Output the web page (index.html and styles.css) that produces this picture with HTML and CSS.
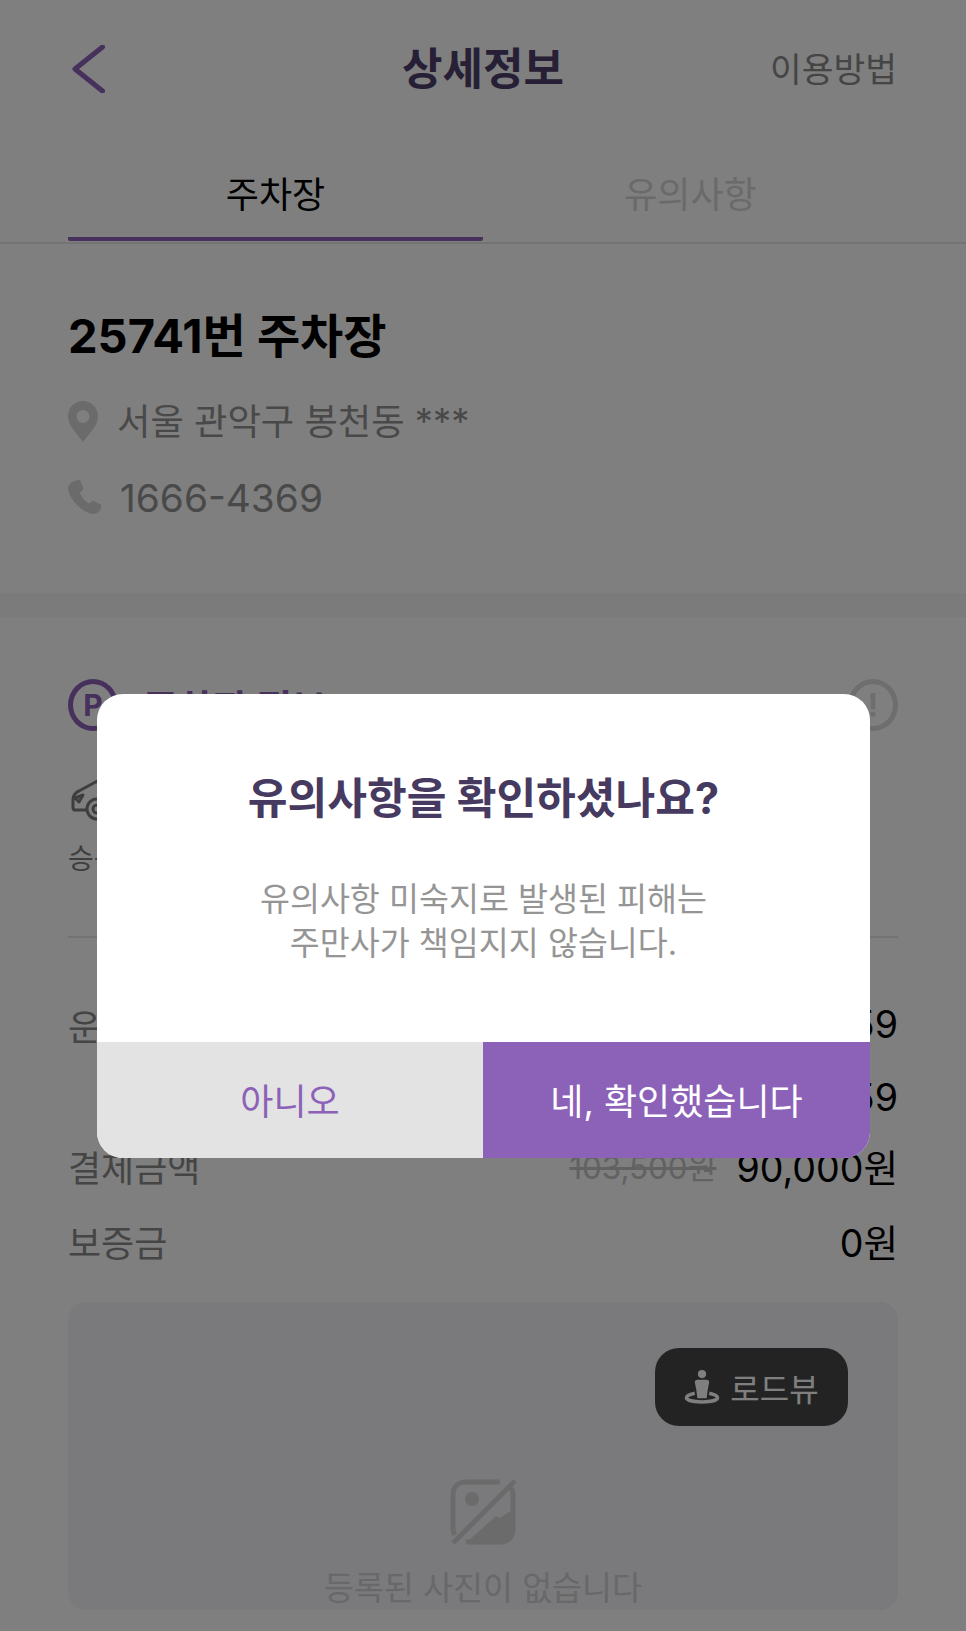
FILE: index.html
```html
<!DOCTYPE html>
<html lang="ko">
<head>
<meta charset="utf-8">
<title>상세정보</title>
<link rel="stylesheet" href="styles.css">
</head>
<body>
<div class="page">
  <header class="header">
    <svg class="back" viewBox="0 0 32 48" aria-hidden="true"><path d="M30 2 2.500 24 30 46" /></svg>
    <h1 class="header-title">상세정보</h1>
    <span class="header-link">이용방법</span>
  </header>
  <nav class="tabs">
    <div class="tab tab-active">주차장</div>
    <div class="tab">유의사항</div>
  </nav>
  <section class="info">
    <h2 class="lot-name">25741번 주차장</h2>
    <div class="info-row info-address">
      <svg class="pin" viewBox="0 0 30 41" aria-hidden="true"><path fill-rule="evenodd" d="M15 0C6.700 0 0 6.700 0 15c0 4.500 1.800 8.500 4.500 12.500L15 41l10.500-13.500C28.200 23.500 30 19.500 30 15 30 6.700 23.300 0 15 0Zm0 9a6.500 6.500 0 1 1 0 13 6.500 6.500 0 0 1 0-13Z"/></svg>
      <span>서울 관악구 봉천동 ***</span>
    </div>
    <div class="info-row info-phone">
      <svg class="phone" viewBox="0 0 34 34" aria-hidden="true"><path d="M7.500.800 10.500 0c1 0 1.700.5 2.100 1.400l2.500 6.400c.3 1 .1 1.800-.6 2.500l-2.800 2.600c1.500 3.600 5.100 8.200 9.100 10.700l3.200-2.300c.8-.5 1.700-.6 2.500-.1l6 3.400c.9.500 1.200 1.400.9 2.300l-1.200 3.200C31 32.400 28.800 33.800 26 34 14 33.600 .8 18.600 0 8.600 0 5 3 1.800 7.500.800Z"/></svg>
      <span>1666-4369</span>
    </div>
  </section>
  <div class="band"></div>
  <section class="detail">
    <div class="detail-head">
      <span class="p-badge">P</span>
      <h3 class="detail-title">주차장 정보</h3>
      <span class="alert-badge">!</span>
    </div>
    <div class="car-block">
      <svg class="car" viewBox="0 0 60 44" aria-hidden="true"><path d="M30 2 8 14Q3 16 2 22V31L3 33H16M4 21l8-3-4 7Z"/><path d="M26 8 40 3"/><circle cx="26" cy="32" r="10"/><circle cx="26" cy="32" r="4"/></svg>
      <span class="car-label">승용</span>
    </div>
    <div class="rows">
      <div class="row row-a"><span class="row-label">운영시간</span><span class="row-value">00:00 ~ 23:59</span></div>
      <div class="row row-a"><span class="row-label"></span><span class="row-value">23:59</span></div>
      <div class="row row-b"><span class="row-label">결제금액</span><span class="row-value"><s class="old-price">103,500원</s>90,000원</span></div>
      <div class="row row-c"><span class="row-label">보증금</span><span class="row-value">0원</span></div>
    </div>
    <div class="photo">
      <div class="roadview">
        <svg class="roadview-icon" viewBox="0 0 34 33" aria-hidden="true"><circle class="rv-fill" cx="17" cy="4" r="4"/><path class="rv-fill" d="M12.500 9.500h9c1.500 0 2.500 1 2.500 2.500l-1.500 7.500-1 8h-9l-1-8L10 12c0-1.500 1-2.500 2.500-2.500Z"/><path class="rv-line" d="M10 22.500C5 23.500 2 25 2 27c0 2.500 6.500 4 15 4s15-1.500 15-4c0-2-3-3.500-8-4.500"/></svg>
        <span>로드뷰</span>
      </div>
      <svg class="no-photo" viewBox="0 0 66 66" aria-hidden="true"><path class="np-frame" d="M50 3H16C8 3 3 8 3 16v33c0 3 .500 5 1.500 7M16 63h34c8 0 13-5 13-13V16c0-3-.500-5-1.500-7"/><circle class="np-fill" cx="22" cy="20" r="7"/><path class="np-fill" d="M16 64 46 37l4 2 12-8v19c0 8-5 14-13 14Z"/><path class="np-slash" d="M65 2 3 64" /></svg>
      <p class="no-photo-text">등록된 사진이 없습니다</p>
    </div>
  </section>

  <div class="overlay">
    <div class="dialog">
      <div class="dialog-body">
        <h2 class="dialog-title">유의사항을 확인하셨나요?</h2>
        <p class="dialog-text">유의사항 미숙지로 발생된 피해는<br>주만사가 책임지지 않습니다.</p>
      </div>
      <div class="dialog-actions">
        <button class="btn btn-no">아니오</button>
        <button class="btn btn-yes">네, 확인했습니다</button>
      </div>
    </div>
  </div>
</div>
</body>
</html>
```
FILE: styles.css
```css
* { box-sizing: border-box; }
html, body { margin: 0; padding: 0; }
body {
  background: #fff;
  font-family: Inter, "Noto Sans CJK KR", sans-serif;
  color: #000;
}
.page {
  position: relative;
  width: 966px;
  height: 1631px;
  overflow: hidden;
  background: #fff;
}
.header {
  height: 136px;
  padding: 0 69px 2px 72px;
  display: flex;
  align-items: center;
  justify-content: space-between;
  position: relative;
}
.back {
  width: 33px;
  height: 48px;
  margin-top: 4px;
  fill: none;
  stroke: #8c61b8;
  stroke-width: 5;
  stroke-linecap: round;
  stroke-linejoin: round;
}
.header-title {
  margin: -3px 0 0;
  position: absolute;
  left: 0;
  right: 0;
  text-align: center;
  font-size: 44px;
  font-weight: 700;
  color: #4c3f6a;
}
.header-link {
  font-size: 34.500px;
  color: #8a8a8a;
}
.tabs {
  height: 108px;
  padding: 0 68px;
  display: flex;
  border-bottom: 2px solid #e6e6e6;
}
.tab {
  flex: 1;
  height: 105px;
  display: flex;
  align-items: center;
  justify-content: center;
  padding-top: 10px;
  font-size: 36px;
  color: #d4d4d4;
  border-bottom: 4px solid transparent;
}
.tab-active {
  color: #000;
  border-bottom-color: #8c61b8;
  border-radius: 2px;
}
.info {
  height: 349px;
  padding: 62px 68px 0;
}
.lot-name {
  margin: 0;
  font-size: 47px;
  line-height: 60px;
  font-weight: 700;
}
.info-row {
  display: flex;
  align-items: center;
  color: #929292;
  font-size: 36.300px;
  height: 50px;
}
.info-address { margin-top: 28px; gap: 19px; }
.info-phone { margin-top: 28px; gap: 18px; font-size: 38.800px; }
.pin { width: 30px; height: 41px; margin-top: 4px; fill: #d6d6d6; }
.phone { width: 34px; height: 34px; fill: #d6d6d6; }
.band { height: 24px; background: #f6f6f6; }
.detail { padding: 62px 68px 0; }
.detail-head {
  display: flex;
  align-items: center;
  height: 52px;
}
.p-badge {
  width: 50px;
  height: 52px;
  border: 5px solid #8c61b8;
  border-radius: 50%;
  color: #8c61b8;
  font-size: 30px;
  font-weight: 700;
  display: flex;
  align-items: center;
  justify-content: center;
}
.detail-title {
  margin: 0 0 0 25px;
  flex: 1;
  font-size: 38px;
  font-weight: 700;
  color: #8c61b8;
}
.alert-badge {
  width: 50px;
  height: 52px;
  border: 5px solid #dcdcdc;
  border-radius: 50%;
  color: #dcdcdc;
  font-size: 32px;
  font-weight: 700;
  display: flex;
  align-items: center;
  justify-content: center;
}
.car-block {
  margin-top: 46px;
  height: 161px;
  border-bottom: 2px solid #e6e6e6;
  display: flex;
  flex-direction: column;
  align-items: flex-start;
}
.car {
  width: 60px;
  height: 44px;
  margin-left: 3px;
  fill: none;
  stroke: #7c7c7c;
  stroke-width: 3;
  stroke-linejoin: round;
}
.car-label {
  margin-top: 20px;
  font-size: 28px;
  line-height: 36px;
  color: #7c7c7c;
}
.rows { padding-top: 50px; }
.row {
  display: flex;
  align-items: center;
  justify-content: space-between;
  font-size: 37.600px;
}
.row-a { height: 73px; }
.row-b { height: 63px; }
.row-c { height: 87px; }
.row-label { color: #8a8a8a; font-size: 36px; }
.row-value { display: flex; align-items: center; }
.old-price {
  font-size: 31.300px;
  color: #c4c4c4;
  margin-right: 20px;
}
.photo {
  position: relative;
  margin-top: 18px;
  height: 308px;
  border-radius: 18px;
  background: #f4f4f8;
  display: flex;
  flex-direction: column;
  align-items: center;
  padding-top: 177px;
}
.roadview {
  position: absolute;
  top: 46px;
  right: 50px;
  width: 193px;
  height: 78px;
  border-radius: 24px;
  background: #464646;
  color: #fff;
  display: flex;
  align-items: center;
  justify-content: center;
  gap: 10px;
  font-size: 32px;
}
.roadview-icon { width: 36px; height: 34px; }
.rv-fill { fill: #fff; }
.rv-line { fill: none; stroke: #fff; stroke-width: 3.500; }
.no-photo { width: 66px; height: 66px; }
.np-frame { fill: none; stroke: #d6d6d6; stroke-width: 5; }
.np-fill { fill: #d6d6d6; }
.np-slash { fill: none; stroke: #d6d6d6; stroke-width: 5; }
.no-photo-text {
  margin: 23px 0 0;
  font-size: 32.600px;
  line-height: 40px;
  color: #d0d0d0;
}
.overlay {
  position: absolute;
  inset: 0;
  background: rgba(0, 0, 0, 0.5);
  padding: 694px 96px 0 97px;
}
.dialog {
  height: 464px;
  border-radius: 26px;
  background: #fff;
  overflow: hidden;
  display: flex;
  flex-direction: column;
}
.dialog-body {
  flex: 1;
  text-align: center;
  padding-top: 74px;
}
.dialog-title {
  margin: 0;
  font-size: 43.200px;
  line-height: 60px;
  font-weight: 700;
  color: #463a60;
}
.dialog-text {
  margin: 49px 0 0;
  font-size: 32.600px;
  line-height: 44px;
  color: #959595;
}
.dialog-actions {
  height: 116px;
  display: flex;
}
.btn {
  flex: 1;
  border: 0;
  padding: 0 0 3px;
  font: inherit;
  font-size: 36px;
}
.btn-no { background: #e3e3e3; color: #8c61b8; flex: 0 0 386px; }
.btn-yes { background: #8c61b8; color: #fff; }
```
